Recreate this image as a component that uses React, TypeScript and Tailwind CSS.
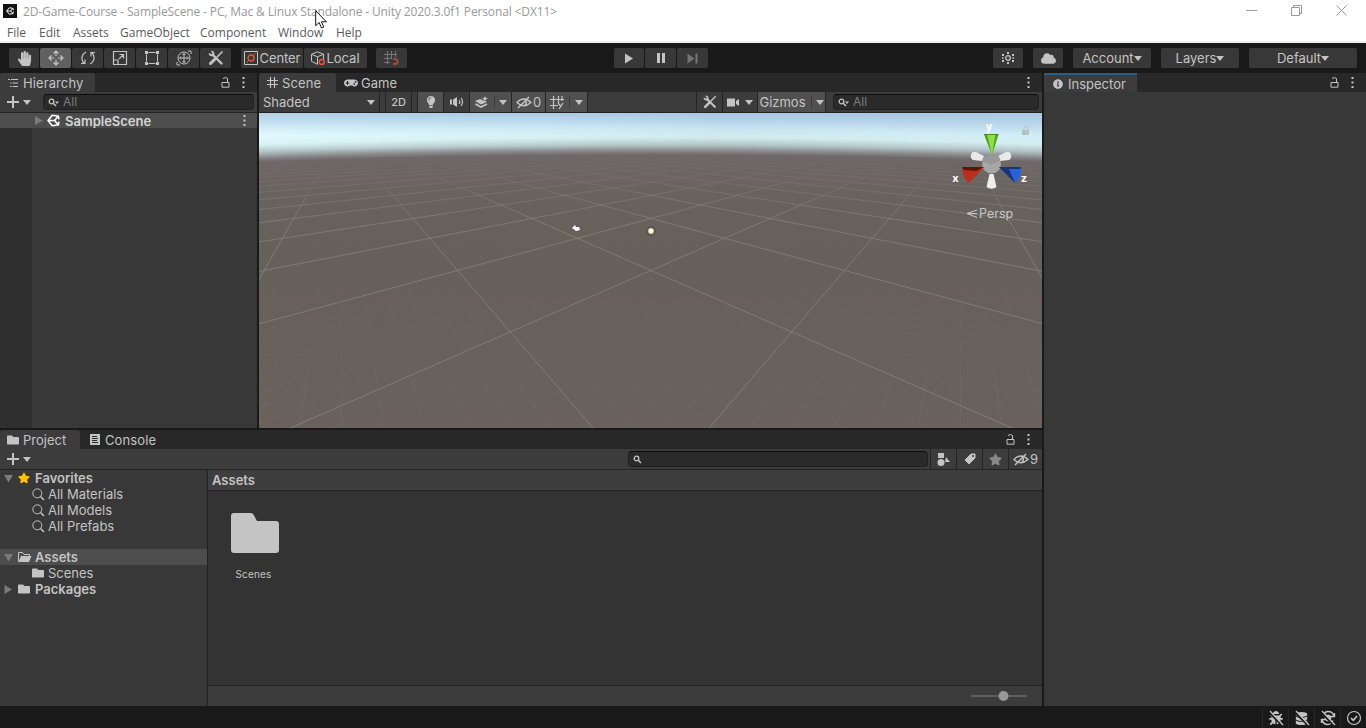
import type { ReactNode } from "react";
import { FaCloud, FaFolder, FaRegFolderOpen, FaStar, FaGamepad, FaInfoCircle, FaHandPaper, FaBug, FaDatabase, FaLightbulb } from "react-icons/fa";

type Kids = { children?: ReactNode };

function Svg({ w = 16, h = 16, children, className = "" }: Kids & { w?: number; h?: number; className?: string }) {
  return (
    <svg width={w} height={h} viewBox={`0 0 ${w} ${h}`} fill="none" stroke="currentColor" className={`shrink-0 ${className}`}>
      {children}
    </svg>
  );
}

const Caret = ({ className = "" }: { className?: string }) => (
  <Svg w={8} h={5} className={className}><path d="M0 0h8L4 5z" fill="currentColor" stroke="none" /></Svg>
);

const Dots = ({ className = "" }: { className?: string }) => (
  <Svg w={3} h={11} className={className}><path d="M.5 0h2v2h-2zM.5 4.5h2v2h-2zM.5 9h2v2h-2z" fill="currentColor" stroke="none" /></Svg>
);

const Lock = ({ className = "" }: { className?: string }) => (
  <Svg w={9} h={11} className={className}><path d="M1 5.5h7v4.700H1zM2 1.500q2.500-2 4.500 0v4" /></Svg>
);

const Lens = ({ caret = false }: { caret?: boolean }) => (
  <Svg w={12} h={9}>
    <circle cx="3.500" cy="3.500" r="2.300" strokeWidth="1.300" />
    <path d="M5.200 5.200L8 8" strokeWidth="1.500" />
    {caret && <path d="M7 3.500h4L9 6z" fill="currentColor" stroke="none" />}
  </Svg>
);

const BigLens = () => (
  <Svg w={13} h={13}>
    <circle cx="5.300" cy="5.300" r="4.500" />
    <path d="M8.500 8.500l3.500 3.500" strokeWidth="1.600" />
  </Svg>
);

const Plus = () => (
  <Svg w={12} h={12}><path d="M6 0v12M0 6h12" strokeWidth="2" /></Svg>
);

const UnityLogo = ({ size = 12 }: { size?: number }) => (
  <svg width={size} height={size} viewBox="0 0 12 12" fill="none" stroke="currentColor" strokeWidth="1.500" className="shrink-0">
    <path d="M5 1L1 6l4 5M1 6h6M5 1.200L10.500 2l.5 3M5 10.800l5.500-.8.5-3M7 6l3.300-4M7 6l3.300 4" />
  </svg>
);

const Tools = ({ size = 16 }: { size?: number }) => (
  <svg width={size} height={size} viewBox="0 0 16 16" fill="none" stroke="currentColor" className="shrink-0">
    <path d="M4.500 4.500l9 9" strokeWidth="2.400" strokeLinecap="round" />
    <path d="M1.500 3.200q0 2.300 2.300 2.300 1.700 0 1.700-1.700 0-2.300-2.300-2.300" strokeWidth="1.700" />
    <path d="M14.500 1.500L8.800 7.200" strokeWidth="1.600" />
    <path d="M7 9l-4.500 4.500" strokeWidth="3" strokeLinecap="round" />
  </svg>
);

const EyeOff = () => (
  <Svg w={16} h={13}>
    <path d="M1 6.500Q7.500-.5 15 6.500 7.500 13 1 6.500z" strokeWidth="1.300" />
    <path d="M9.500 4.500q2 2-.5 4.200" strokeWidth="1.500" />
    <path d="M2 12L13 1" strokeWidth="1.500" />
  </Svg>
);

function Button({ children, className = "" }: Kids & { className?: string }) {
  return (
    <div className={`flex h-5 shrink-0 items-center justify-center rounded-[2px] bg-[#383838] ${className}`}>{children}</div>
  );
}

function Search({ children, className = "" }: Kids & { className?: string }) {
  return (
    <div className={`flex h-4 items-center rounded-[4px] border border-[#212121] border-t-[#0d0d0d] bg-[#2a2a2a] text-xs text-[#7d7d7d] ${className}`}>
      {children}
    </div>
  );
}

function TitleBar() {
  return (
    <div className="flex h-[22px] items-start bg-white font-['Open_Sans',sans-serif] text-xs text-[#999]">
      <div className="mt-1 ml-[3px] flex h-[14px] w-[14px] items-center justify-center bg-[#111] text-white"><UnityLogo size={8} /></div>
      <span className="mt-1 ml-1.5 leading-4 tracking-[-0.13px] whitespace-nowrap">
        2D-Game-Course - SampleScene - PC, Mac &amp; Linux Standalone - Unity 2020.3.0f1 Personal &lt;DX11&gt;
      </span>
      <div className="mt-[5px] mr-[19px] ml-auto flex gap-[34px]">
        <Svg w={11} h={11}><path d="M0 5.500h11" /></Svg>
        <Svg w={11} h={11}><path d="M.5 2.500h8v8h-8zM2.500 2.500v-2h8v8h-2" /></Svg>
        <Svg w={11} h={11}><path d="M.5.5l10 10M10.500.5l-10 10" /></Svg>
      </div>
    </div>
  );
}

function MenuBar() {
  return (
    <div className="flex h-[21px] border-b-2 border-[#f0f0f0] bg-white pl-[7px] font-['Open_Sans',sans-serif] text-xs leading-[21px] text-[#5b5b5b]">
      <span className="w-8">File</span>
      <span className="w-[34px]">Edit</span>
      <span className="w-[47px]">Assets</span>
      <span className="w-20">GameObject</span>
      <span className="w-[78px]">Component</span>
      <span className="w-[58px]">Window</span>
      <span>Help</span>
    </div>
  );
}

function Toolbar() {
  return (
    <div className="flex h-[30px] items-center bg-[#191919] pl-[9px]">
      <div className="flex gap-px">
        <Button className="w-[30px]"><FaHandPaper size={15} /></Button>
        <Button className="w-[31px] bg-[#606060]">
          <Svg><path d="M8 1v5M8 10v5M1 8h5M10 8h5M5.500 3.500L8 1l2.500 2.500M5.500 12.500L8 15l2.500-2.500M3.500 5.500L1 8l2.500 2.500M12.500 5.500L15 8l-2.500 2.500" strokeWidth="1.200" /></Svg>
        </Button>
        <Button className="w-[31px]">
          <Svg><path d="M6 2Q1.500 4.500 2 9q.3 2.500 2.500 5M1 13.500h4V9.500M10 14q4.500-2.500 4-7-.3-2.500-2.500-5M15 2.500h-4v4" strokeWidth="1.200" /></Svg>
        </Button>
        <Button className="w-[31px]">
          <Svg><path d="M1.500 1.500h13v13h-13zM1.500 10h4.500v4.500M7 9l4.500-4.500M7.500 4.500h4v4" strokeWidth="1.200" /></Svg>
        </Button>
        <Button className="w-[31px]">
          <Svg><path d="M4.500 2.500h7M4.500 13.500h7M2.500 4.500v7M13.500 4.500v7" /><path d="M1 1h3v3H1zM12 1h3v3h-3zM1 12h3v3H1zM12 12h3v3h-3z" fill="currentColor" stroke="none" /></Svg>
        </Button>
        <Button className="w-[31px]">
          <Svg><circle cx="8" cy="8" r="6" /><path d="M8 3.500v9M3.500 8h9M6.500 5L8 3.500 9.500 5M6.500 11L8 12.500 9.500 11M5 6.500L3.500 8 5 9.500M11 6.500L12.500 8 11 9.500M12 1h3v3M1 12v3h3" /></Svg>
        </Button>
        <Button className="w-[31px]"><Tools /></Button>
      </div>
      <div className="ml-[10px] flex gap-px">
        <Button className="w-[62px] gap-[2px]">
          <Svg w={14} h={14}><path d="M.5.5h13v13H.5z" /><g stroke="#e8593a"><circle cx="7" cy="7" r="3" strokeWidth="1.300" /><path d="M2.500 11.500l2.500-2.500M9 5l2.500-2.500" /></g></Svg>
          <span className="tracking-[-0.1px]">Center</span>
        </Button>
        <Button className="w-[63px]">
          <Svg w={15} h={15}><path d="M6.500.8l6 2.500v6M6.500.8l-6 2.500v7l6 3M.5 3.300l6 2.500 6-2.500M6.500 5.800v7.500" /><circle cx="10.800" cy="11" r="2.500" stroke="#e8593a" strokeWidth="1.400" /></Svg>
          <span>Local</span>
        </Button>
      </div>
      <Button className="ml-[9px] w-[31px] bg-[#222]">
        <Svg w={15} h={15} className="text-[#777]"><path d="M3.500 0v13M7.500 0v8M11.500 0v6M0 3.500h13M0 7.500h8M0 11.500h6" /><path d="M9 8h2q2.500 0 2.500 2.500T11 13H9" stroke="#a3483a" strokeWidth="2" /></Svg>
      </Button>

      <div className="ml-[207px] flex gap-px">
        <Button className="w-[30px]"><Svg w={10} h={11}><path d="M1 .5v10l8-5z" fill="currentColor" stroke="none" /></Svg></Button>
        <Button className="w-[31px]"><Svg w={8} h={10}><path d="M0 0h3v10H0zM5 0h3v10H5z" fill="currentColor" stroke="none" /></Svg></Button>
        <Button className="w-[31px] bg-[#262626] text-[#757575]"><Svg w={11} h={11}><path d="M.5.5v10l7-5zM8.500.5h2v10h-2z" fill="currentColor" stroke="none" /></Svg></Button>
      </div>

      <div className="mr-[9px] ml-auto flex gap-[10px]">
        <Button className="w-[30px]">
          <Svg w={14} h={14}><circle cx="7" cy="7" r="2.300" strokeWidth="1.300" /><path d="M6 1h2v2H6zM6 11h2v2H6zM1 3h2v2H1zM11 3h2v2h-2zM1 6.200h1.600v1.600H1zM11.400 6.200H13v1.600h-1.600zM1 9h2v2H1zM11 9h2v2h-2z" fill="currentColor" stroke="none" /></Svg>
        </Button>
        <Button className="w-[30px]"><FaCloud size={15} /></Button>
        <Button className="w-[78px] justify-between pr-[5px] pl-[5px]"><span>Account</span><Caret /></Button>
        <Button className="w-[78px] justify-between pr-[5px] pl-[5px]"><span>Layers</span><Caret /></Button>
        <Button className="w-[108px] justify-between pr-[5px] pl-[5px]"><span>Default</span><Caret /></Button>
      </div>
    </div>
  );
}

function Hierarchy() {
  return (
    <section className="flex w-[257px] shrink-0 flex-col">
      <div className="flex h-[19px] items-center bg-[#282828]">
        <div className="flex h-full w-[95px] items-center gap-[5px] rounded-t-[3px] bg-[#3c3c3c] pl-2">
          <Svg w={10} h={10}><path d="M0 1.500h2M3 1.500h7M2 5h1.500M4.500 5H10M2 8.500h1.500M4.500 8.500H10" strokeWidth="1.200" /></Svg>
          <span className="tracking-[0.1px]">Hierarchy</span>
        </div>
        <Lock className="ml-auto" />
        <Dots className="mr-3 ml-3" />
      </div>
      <div className="flex h-[21px] items-center border-b border-[#232323] bg-[#3c3c3c] pr-[3px] pl-[7px]">
        <Plus />
        <Caret className="ml-1" />
        <Search className="ml-3 flex-1 gap-[3px] pl-1"><span className="text-[#c4c4c4]"><Lens caret /></span>All</Search>
      </div>
      <div className="flex h-[15px] items-center bg-[#4d4d4d] pl-[35px] font-semibold">
        <Svg w={8} h={9} className="text-[#7a7a7a]"><path d="M0 0v9l8-4.500z" fill="currentColor" stroke="none" /></Svg>
        <span className="mr-[5px] ml-1 flex text-white"><UnityLogo size={13} /></span>
        <span className="text-[#d6d6d6]">SampleScene</span>
        <Dots className="mr-[11px] ml-auto" />
      </div>
      <div className="flex-1 bg-[#383838]"><div className="h-full w-8 bg-[#2f2f2f]" /></div>
    </section>
  );
}

// camera looks along the diagonal of the ground plane, so every grid vertex
// is a number of half steps in depth (a + b) and sideways (a - b)
function project(a: number, b: number) {
  const u = 1 / (0.007396 + 0.00231 * (a + b));
  return [392 + 0.7155 * u * (a - b), 22.3 + u];
}

function gridPath(step: number, from: number, to: number, far: number) {
  let d = "";
  const near = -2.6;
  for (let i = from; i <= to; i++) {
    const a = i * step;
    const [x1, y1] = project(a, near - a);
    const [x2, y2] = project(a, far - a + Math.abs(a));
    d += `M${x1.toFixed(1)} ${y1.toFixed(1)}L${x2.toFixed(1)} ${y2.toFixed(1)}`;
    d += `M${(784 - x1).toFixed(1)} ${y1.toFixed(1)}L${(784 - x2).toFixed(1)} ${y2.toFixed(1)}`;
  }
  return d;
}

const majorGrid = gridPath(1, -24, 24, 60);
const minorGrid = gridPath(0.1, -60, 60, 8);

function Viewport() {
  return (
    <svg width="783" height="315" viewBox="0 0 783 315" className="block">
      <defs>
        <linearGradient id="ground" x1="0" y1="0" x2="0" y2="1">
          <stop offset="0.1" stopColor="#706767" />
          <stop offset="0.3" stopColor="#67625d" />
          <stop offset="0.5" stopColor="#66605a" />
          <stop offset="1" stopColor="#6a615d" />
        </linearGradient>
        <radialGradient id="sky" gradientUnits="userSpaceOnUse" cx="392" cy="11020" r="11020">
          <stop offset="0.9957" stopColor="#6f6868" stopOpacity="0" />
          <stop offset="0.9962" stopColor="#6f6869" />
          <stop offset="0.9966" stopColor="#8b8b8d" />
          <stop offset="0.9971" stopColor="#b1c3c5" />
          <stop offset="0.9978" stopColor="#d2ebee" />
          <stop offset="0.9985" stopColor="#cbe6f2" />
          <stop offset="0.9993" stopColor="#b7d2ea" />
          <stop offset="1" stopColor="#a9c7e2" />
        </radialGradient>
        <linearGradient id="glow" x1="0" y1="0" x2="1" y2="0">
          <stop offset="0" stopColor="#e6ffff" stopOpacity="0.8" />
          <stop offset="0.6" stopColor="#e0ffff" stopOpacity="0" />
          <stop offset="1" stopColor="#e0ffff" stopOpacity="0.35" />
        </linearGradient>
        <linearGradient id="fadeY" x1="0" y1="0" x2="0" y2="1">
          <stop offset="0" stopColor="#333" />
          <stop offset="0.6" stopColor="#fff" />
          <stop offset="1" stopColor="#000" />
        </linearGradient>
        <linearGradient id="fadeGrid" x1="0" y1="0" x2="0" y2="1">
          <stop offset="0.13" stopColor="#000" />
          <stop offset="0.35" stopColor="#fff" />
        </linearGradient>
        <linearGradient id="fadeMinor" x1="0" y1="0" x2="0" y2="1">
          <stop offset="0.4" stopColor="#000" />
          <stop offset="0.9" stopColor="#fff" />
        </linearGradient>
        <mask id="glowMask"><rect width="783" height="38" fill="url(#fadeY)" /></mask>
        <mask id="gridMask"><rect width="783" height="315" fill="url(#fadeGrid)" /></mask>
        <mask id="minorMask"><rect width="783" height="315" fill="url(#fadeMinor)" /></mask>
      </defs>
      <rect width="783" height="315" fill="url(#ground)" />
      <g mask="url(#minorMask)"><path d={minorGrid} stroke="#8a8681" strokeOpacity="0.16" fill="none" /></g>
      <g mask="url(#gridMask)"><path d={majorGrid} stroke="#908e8a" strokeOpacity="0.6" fill="none" /></g>
      <rect width="783" height="60" fill="url(#sky)" />
      <rect width="783" height="38" fill="url(#glow)" mask="url(#glowMask)" />

      {/* camera and light gizmos */}
      <path d="M313 115l3-3 1 2h3l1 3-4 1z" fill="#fff" />
      <circle cx="392" cy="118" r="4.500" fill="none" stroke="#3d3a36" strokeDasharray="1.500 1.500" />
      <circle cx="392" cy="118" r="2.700" fill="#fff6d2" />

      {/* orientation gizmo */}
      <g>
        <path d="M712 42q1-4 5-3l8 4-2 5-9-1q-3-2-2-5zM752 42q-1-4-5-3l-8 4 2 5 9-1q3-2 2-5z" fill="#e9e9e9" />
        <circle cx="732.500" cy="51" r="9.500" fill="#a7a7a7" />
        <path d="M723 48l9.500 4 9-5-2-4-7-2-7 2z" fill="#989898" />
        <path d="M725 21h14.500L733 42z" fill="#8ae048" />
        <path d="M725 21h3l5 21zM739.500 21h-3L733 42z" fill="#569b22" />
        <path d="M725 21.500h14.500" stroke="#4b8a1e" />
        <path d="M703 54l22 0-15 16q-7-5-7-16z" fill="#b8301b" />
        <path d="M703 54h22l-8 4-12-1z" fill="#5c130b" />
        <path d="M740 54l22 0q1 9-6 16z" fill="#2c60d8" />
        <path d="M740 54h22l-1 2h-11l6 14z" fill="#183577" />
        <path d="M730.500 61h4l3 13q-5 3.500-10 0z" fill="#eee" />
        <g fill="#fff" className="font-['Inter',sans-serif] text-[11px] font-bold" textAnchor="middle">
          <text x="730" y="17">y</text>
          <text x="696.500" y="69">x</text>
          <text x="765" y="69">z</text>
        </g>
      </g>
      <path d="M763 17h7v5h-7z" fill="#b5c2c2" />
      <path d="M765 17v-3q2-2 4 0v3" fill="none" stroke="#b5c2c2" />
      <path d="M718 97l-10 3.500 10 4M708 100.500h10" fill="none" stroke="#c8c8c8" />
      <text x="720" y="105" fill="#c8c8c8" className="font-['Inter',sans-serif] text-[12.5px]">Persp</text>
    </svg>
  );
}

function Scene() {
  const cell = "flex h-full shrink-0 items-center justify-center border-r border-[#242424]";
  return (
    <section className="flex w-[783px] shrink-0 flex-col">
      <div className="flex h-[19px] items-center bg-[#282828]">
        <div className="flex h-full w-[77px] items-center gap-1 rounded-t-[3px] bg-[#3c3c3c] pl-2">
          <Svg w={11} h={11}><path d="M3.500 0v11M7.500 0v11M0 3.500h11M0 7.500h11" strokeWidth="1.200" /></Svg>
          <span className="tracking-[0.1px]">Scene</span>
        </div>
        <span className="ml-2 flex"><FaGamepad size={14} /></span>
        <span className="ml-[3px]">Game</span>
        <Dots className="mr-3 ml-auto" />
      </div>
      <div className="flex h-[21px] items-center border-b border-[#232323] bg-[#3c3c3c]">
        <div className="flex h-full w-[121px] items-center justify-between border-r border-[#242424] pr-1 pl-1"><span>Shaded</span><Caret /></div>
        <div className={`${cell} ml-[5px] w-[27px] border-l text-[11px] font-medium`}>2D</div>
        <div className={`${cell} ml-[5px] w-[27px] border-l bg-[#505050]`}><FaLightbulb size={12} /></div>
        <div className={`${cell} w-[26px]`}>
          <Svg w={14} h={12}><path d="M0 3.500h2v5H0zM3 3.500L7 1v10L3 8.500z" fill="currentColor" stroke="none" /><path d="M9 4q1.500 2 0 4M11 2q3 4 0 8" strokeWidth="1.200" /></Svg>
        </div>
        <div className={`${cell} w-[42px] bg-[#505050]`}>
          <Svg w={14} h={13}><path d="M0 5l5-2 7 3-6 2.500z" fill="currentColor" stroke="none" /><path d="M.5 8l5.500 3 6-3" strokeWidth="1.800" /><path d="M10 0l1 2 2 .5-2 1-1 2-1-2-2-1 2-.5z" fill="currentColor" stroke="none" /></Svg>
          <span className="mr-1 ml-[5px] h-3 w-px bg-[#3a3a3a]" /><Caret />
        </div>
        <div className={`${cell} w-[34px] gap-px bg-[#505050]`}><EyeOff /><span>0</span></div>
        <div className={`${cell} w-[42px] bg-[#505050]`}>
          <Svg w={15} h={13}><path d="M3.500 0v13M8.500 0v7M0 3.500h14M0 9.500h8M8 7l2.500 3M13 7l-4 6M12 0v5" strokeWidth="1.200" /></Svg>
          <span className="mr-[5px] ml-1 h-3 w-px bg-[#3a3a3a]" /><Caret />
        </div>
        <div className={`${cell} ml-auto w-[27px] border-l`}><Tools size={14} /></div>
        <div className={`${cell} w-[35px] gap-[5px]`}>
          <Svg w={13} h={9}><path d="M0 .5h8v8H0zM9 3l3-2v7L9 6z" fill="currentColor" stroke="none" /></Svg>
          <Caret />
        </div>
        <div className={`${cell} w-[68px] bg-[#505050]`}>
          <span>Gizmos</span><span className="mr-1 ml-[5px] h-3 w-px bg-[#3a3a3a]" /><Caret />
        </div>
        <Search className="mr-[3px] ml-[7px] w-[206px] gap-[3px] pl-1"><span className="text-[#c4c4c4]"><Lens caret /></span>All</Search>
      </div>
      <Viewport />
    </section>
  );
}

function ProjectTree() {
  const arrow = (open: boolean) => (
    <Svg w={9} h={9} className="text-[#7a7a7a]"><path d={open ? "M0 1h9L4.500 8.500z" : "M.5 0v9L8 4.500z"} fill="currentColor" stroke="none" /></Svg>
  );
  return (
    <div className="w-[208px] shrink-0 border-r border-[#222] bg-[#383838]">
      <div className="flex h-4 items-center gap-[5px] pl-1 font-semibold">{arrow(true)}<FaStar size={12} color="#ffc107" />Favorites</div>
      {["All Materials", "All Models", "All Prefabs"].map((t) => (
        <div key={t} className="flex h-4 items-center gap-[3px] pl-8"><BigLens />{t}</div>
      ))}
      <div className="mt-[15px] flex h-4 items-center bg-[#4d4d4d] pl-1 font-semibold">
        {arrow(true)}
        <Svg w={14} h={12} className="mr-[3px] ml-[5px]"><path d="M.5 10.500v-9h4l1.500 2h5.500v2" /><path d="M3 5h10.500L11 11H.5z" fill="currentColor" stroke="none" /></Svg>
        Assets
      </div>
      <div className="flex h-4 items-center gap-1 pl-8"><FaFolder size={12} />Scenes</div>
      <div className="flex h-4 items-center gap-[5px] pl-1 font-semibold">{arrow(false)}<FaFolder size={12} />Packages</div>
    </div>
  );
}

function Project() {
  const cell = "flex h-full items-center justify-center border-l border-[#242424]";
  return (
    <section className="flex min-h-0 flex-1 flex-col">
      <div className="flex h-[19px] items-center bg-[#282828]">
        <div className="flex h-full w-20 items-center gap-1 rounded-t-[3px] bg-[#3c3c3c] pl-[7px]"><FaFolder size={12} />Project</div>
        <Svg w={10} h={11} className="ml-[10px]"><path d="M0 0h10v11H0z" fill="currentColor" stroke="none" /><path d="M2 2.500h5M2 4.500h6M2 6.500h5M2 8.500h6" stroke="#282828" /></Svg>
        <span className="ml-[5px] tracking-[0.1px]">Console</span>
        <Lock className="ml-auto" />
        <Dots className="mr-3 ml-3" />
      </div>
      <div className="flex h-[21px] items-center border-b border-[#232323] bg-[#3c3c3c] pl-[7px]">
        <Plus />
        <Caret className="ml-1" />
        <Search className="mr-[2px] ml-auto w-[300px] pl-1 text-[#c4c4c4]!"><Lens /></Search>
        <div className={`${cell} w-[26px]`}><Svg w={13} h={13}><path d="M1 0h6v5H1zM9 4l4 5H8z" fill="currentColor" stroke="none" /><circle cx="4" cy="9.500" r="3.500" fill="currentColor" stroke="none" /></Svg></div>
        <div className={`${cell} w-[26px]`}><Svg w={12} h={12}><path d="M1 7l6-6h4v4l-6 6z" fill="currentColor" /><circle cx="9" cy="3" r="1" fill="#3c3c3c" stroke="none" /></Svg></div>
        <div className={`${cell} w-[26px] text-[#888]`}><FaStar size={13} /></div>
        <div className={`${cell} w-[34px] gap-px`}><EyeOff /><span>9</span></div>
      </div>
      <div className="flex min-h-0 flex-1">
        <ProjectTree />
        <div className="flex flex-1 flex-col bg-[#333]">
          <div className="flex h-[21px] items-center border-b border-[#242424] bg-[#3e3e3e] pl-1 font-semibold">Assets</div>
          <div className="flex w-[94px] flex-1 flex-col items-center pt-[22px] text-[10px]">
            <Svg w={48} h={40}><path d="M3 0h17q1.500 0 2.500 1.500L26 8h19q3 0 3 3v26q0 3-3 3H3q-3 0-3-3V3q0-3 3-3z" fill="#c4c4c4" stroke="none" /></Svg>
            <span className="mt-[13px] -ml-[3px] tracking-[0.2px]">Scenes</span>
          </div>
          <div className="flex h-[21px] items-center justify-end border-t border-[#242424] bg-[#3c3c3c] pr-[15px]">
            <Svg w={56} h={10}><path d="M0 5h56" stroke="#5e5e5e" strokeWidth="2" /><circle cx="32.500" cy="5" r="5" fill="#999" stroke="none" /></Svg>
          </div>
        </div>
      </div>
    </section>
  );
}

function Inspector() {
  return (
    <section className="flex flex-1 flex-col bg-[#383838]">
      <div className="flex h-[19px] items-center bg-[#282828]">
        <div className="flex h-full w-[93px] items-center gap-[5px] border-t-2 border-[#2c5d87] bg-[#3c3c3c] pl-[9px]">
          <FaInfoCircle size={10} />Inspector
        </div>
        <Lock className="ml-auto" />
        <Dots className="mr-3 ml-3" />
      </div>
    </section>
  );
}

function StatusBar() {
  const cell = "flex h-5 w-[26px] items-center justify-center border-l border-[#262626]";
  const slash = (
    <svg width="16" height="16" viewBox="0 0 16 16" className="absolute inset-0">
      <path d="M1 2l13 13" stroke="#191919" strokeWidth="2.500" />
      <path d="M2 1l13 14" stroke="#c4c4c4" strokeWidth="1.300" />
    </svg>
  );
  return (
    <div className="flex h-[22px] items-center justify-end bg-[#191919] pt-[2px]">
      <div className={cell}><span className="relative flex h-4 w-4 items-center justify-center"><FaBug size={14} />{slash}</span></div>
      <div className={cell}><span className="relative flex h-4 w-4 items-center justify-center"><FaDatabase size={13} />{slash}</span></div>
      <div className={cell}>
        <span className="relative flex h-4 w-4 items-center justify-center">
          <Svg><path d="M3 5.500Q5 1.500 8 1.500q5 0 6 5M13 10.500q-2 4-5 4-5 0-6-5M14.500 3v3.500H11M1.500 13V9.500H5" strokeWidth="1.400" /><circle cx="8" cy="8" r="3" fill="currentColor" /></Svg>
          {slash}
        </span>
      </div>
      <div className={cell}><Svg><circle cx="8" cy="8" r="6.500" strokeWidth="1.200" /><path d="M5 8l2.300 2.300L11 6" strokeWidth="1.600" /></Svg></div>
    </div>
  );
}

export default function App() {
  return (
    <div className="relative flex h-[728px] w-[1366px] flex-col overflow-hidden bg-[#191919] font-['Inter',sans-serif] text-[13px] leading-4 text-[#c4c4c4]">
      <TitleBar />
      <MenuBar />
      <Toolbar />
      <main className="flex min-h-0 flex-1 gap-[2px]">
        <div className="flex w-[1042px] shrink-0 flex-col gap-[2px]">
          <div className="flex h-[355px] gap-[2px]">
            <Hierarchy />
            <Scene />
          </div>
          <Project />
        </div>
        <Inspector />
      </main>
      <StatusBar />
      <svg width="13" height="19" viewBox="0 0 13 19" className="absolute top-[10px] left-[315px]">
        <path d="M.7.700v15l3.400-3.200L6.500 18l2.300-1-2.400-5.200h5z" fill="#fff" stroke="#111" />
      </svg>
    </div>
  );
}
